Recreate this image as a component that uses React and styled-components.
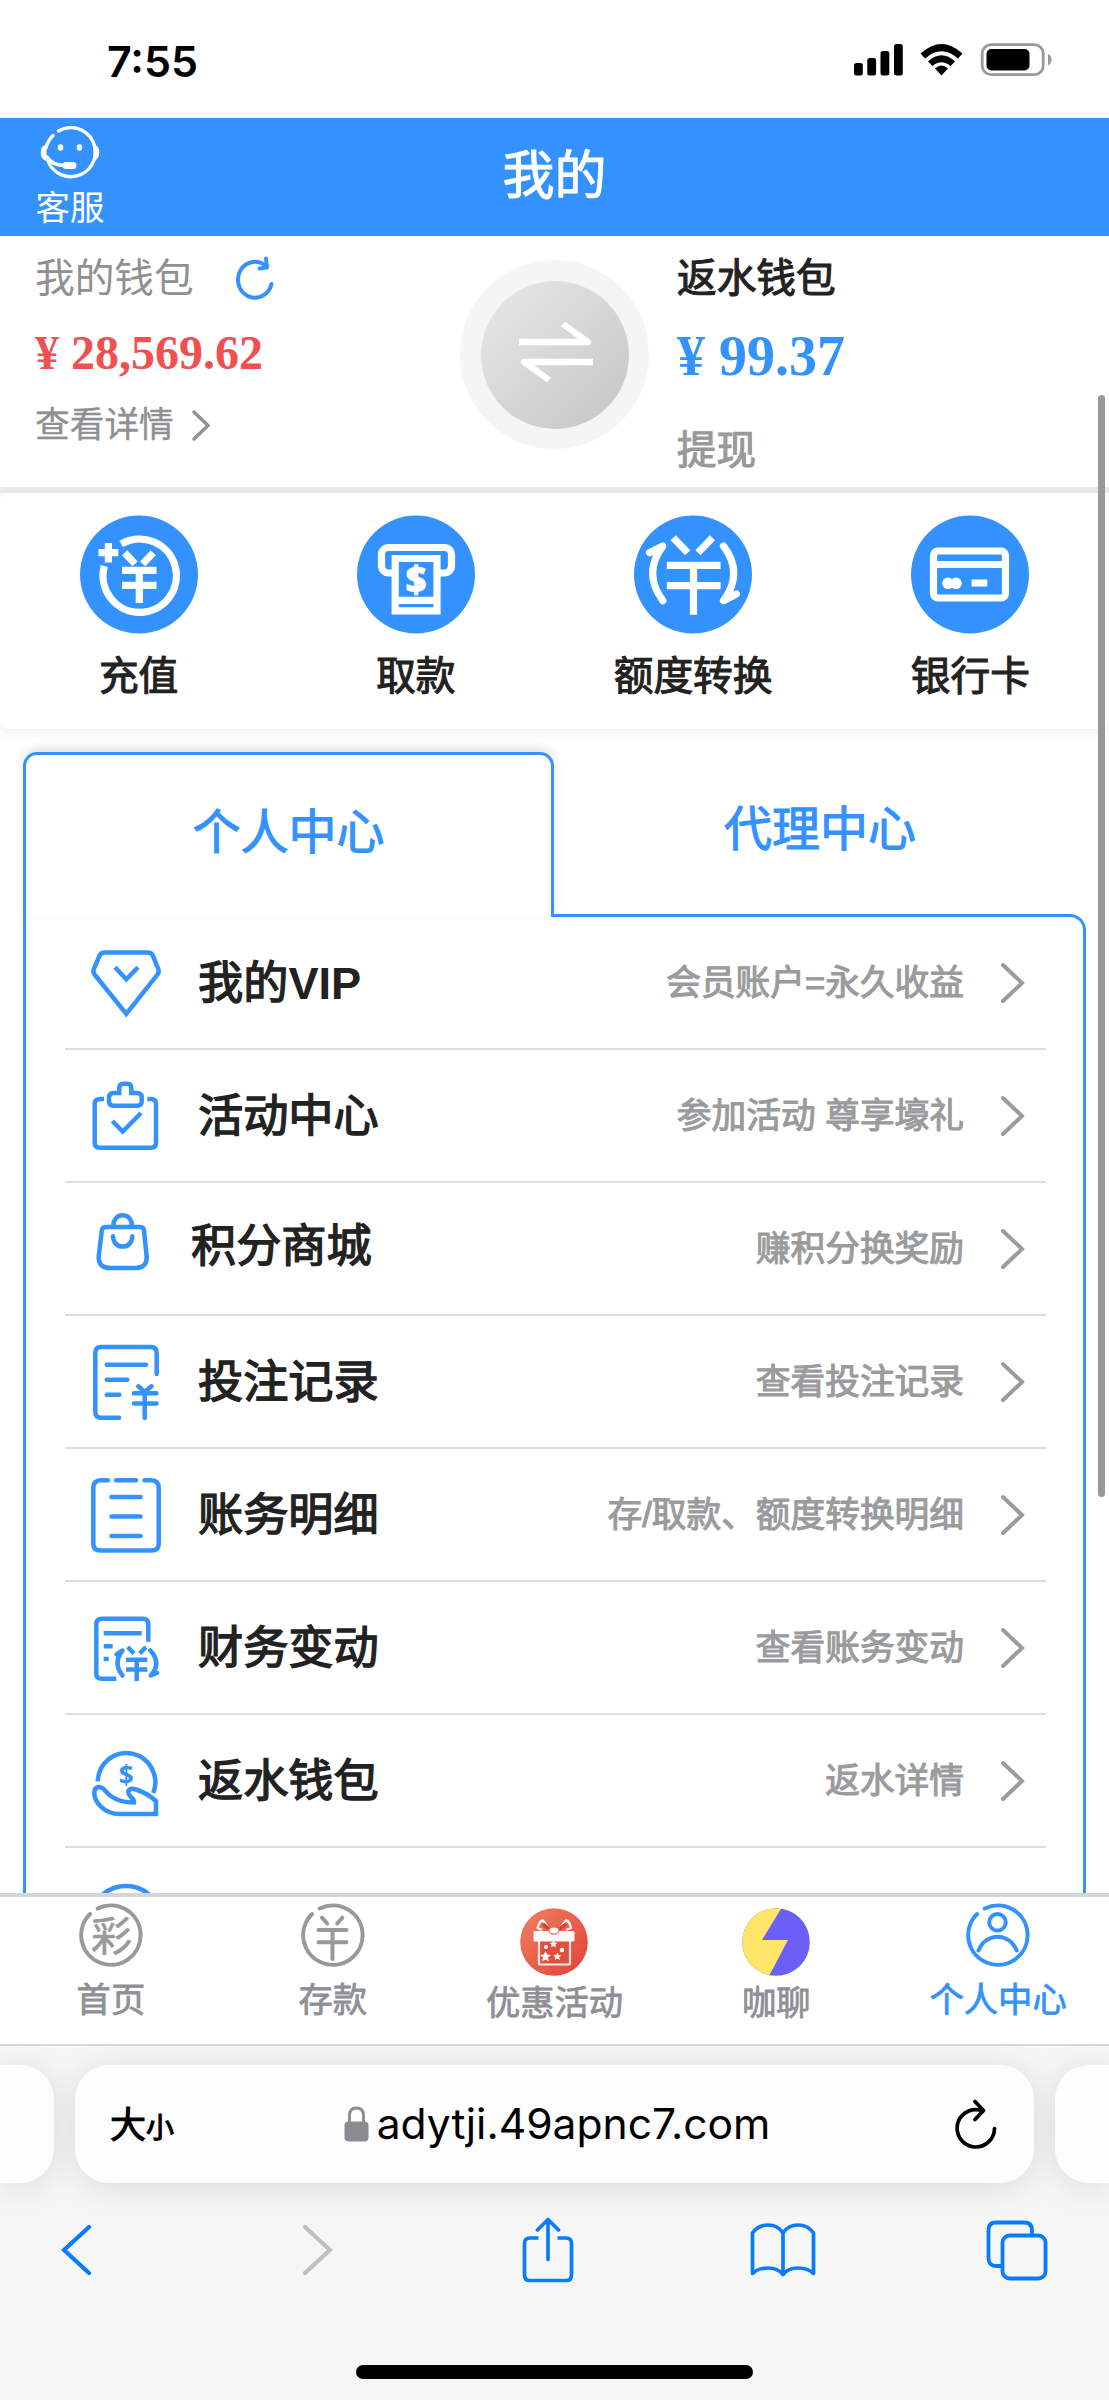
import styled, { createGlobalStyle, css } from "styled-components";

const BLUE = "#3492ff";
const IOS_BLUE = "#087cff";

const SvgText = styled.text`
  font-family: ${({ $bold }) => ($bold ? `"Open Sans", sans-serif` : `"Noto Sans CJK SC", sans-serif`)};
  font-size: ${({ $size }) => $size}px;
  font-weight: ${({ $bold }) => ($bold ? 700 : 400)};
  text-anchor: middle;
`;

const menus = [
  { icon: "vip", title: "我的", suffix: "VIP", desc: "会员账户=永久收益" },
  { icon: "activity", title: "活动中心", desc: "参加活动 尊享壕礼" },
  { icon: "mall", title: "积分商城", desc: "赚积分换奖励", narrow: true },
  { icon: "bet", title: "投注记录", desc: "查看投注记录" },
  { icon: "account", title: "账务明细", desc: "存/取款、额度转换明细" },
  { icon: "finance", title: "财务变动", desc: "查看账务变动" },
  { icon: "rebate", title: "返水钱包", desc: "返水详情" },
  { icon: "more", title: "", desc: "" },
];

const StatusIcons = () => (
  <svg width="200" height="36" viewBox="0 0 200 36">
    <rect x="1" y="21" width="8.8" height="12.5" rx="2.5" />
    <rect x="14.3" y="16" width="8.8" height="17.5" rx="2.5" />
    <rect x="27.5" y="9" width="8.8" height="24.5" rx="2.5" />
    <rect x="41" y="2" width="8.8" height="31.5" rx="2.5" />
    <path d="M67.5 11.5 Q88.5 -7.5 109.5 11.5 L105 16.5 Q88.5 2 72 16.5 Z" />
    <path d="M75 19.5 Q88.5 7 102 19.5 L97.5 24 Q88.5 16.5 79.5 24 Z" />
    <path d="M82 26.5 Q88.5 20.5 95 26.5 L88.5 33.5 Z" />
    <rect x="129.2" y="2.7" width="61" height="30" rx="9" fill="none" stroke="#9a9a9a" strokeWidth="2.8" />
    <rect x="133.5" y="7" width="43" height="21.5" rx="5" />
    <path d="M195 12 Q198.5 13.5 198.5 17.7 Q198.5 22 195 23.4 Z" fill="#9a9a9a" />
  </svg>
);

const ServiceIcon = () => (
  <svg width="60" height="54" viewBox="0 0 60 54" fill="none" stroke="#fff" strokeWidth="3.4" strokeLinecap="round">
    <path d="M18.5 5 A24.5 24.5 0 1 1 8 35" />
    <path d="M13 9.5 A25 25 0 0 0 6 22" />
    <path d="M5.5 20 Q1.5 21 1.8 27 Q2 32 5.5 33.5 Z" fill="#fff" strokeWidth="2" />
    <path d="M54.5 20 Q58.5 21 58.2 27 Q58 32 54.5 33.5 Z" fill="#fff" strokeWidth="2" />
    <path d="M7 31 Q12 39 24 39.5" />
    <rect x="24" y="37.5" width="11" height="4" rx="2" fill="#fff" strokeWidth="3" />
    <ellipse cx="20.5" cy="21.5" rx="1.6" ry="2" fill="#fff" strokeWidth="2.4" />
    <ellipse cx="39.5" cy="21.5" rx="1.6" ry="2" fill="#fff" strokeWidth="2.4" />
  </svg>
);

const RefreshIcon = () => (
  <svg width="40" height="44" viewBox="0 0 40 44" fill="none" stroke={BLUE} strokeWidth="4" strokeLinecap="round" strokeLinejoin="round">
    <path d="M31 10 A17 18 0 1 0 36.5 28" />
    <path d="M31 2.5 L32 11.5 L24.5 12.5" />
  </svg>
);

const SwapIcon = () => (
  <svg width="76" height="62" viewBox="0 0 76 62" fill="none" stroke="#fff" strokeWidth="6.4" strokeLinejoin="round">
    <path d="M1 21 H70 L45 3" />
    <path d="M75 41 H6 L31 59" />
  </svg>
);

const Chevron = ({ w = 24, h = 42, color = "#999b9d", stroke = 3.6, left }) => (
  <svg width={w} height={h} viewBox={`0 0 ${w} ${h}`} fill="none" stroke={color} strokeWidth={stroke} strokeLinecap="round" strokeLinejoin="miter">
    <path d={left ? `M${w - 3} 3 L3 ${h / 2} L${w - 3} ${h - 3}` : `M3 3 L${w - 3} ${h / 2} L3 ${h - 3}`} />
  </svg>
);

const actionIcons = {
  recharge: (
    <>
      <path d="M24.3 51 A36.7 36.7 0 1 0 41.2 29" />
      <path d="M18.5 37.7 H38.3 M28.4 28 V47.5" />
      <path d="M44.7 37.7 L55 48.9 M73.3 37.7 L62.7 48.9 M42 55.3 H76.5 M42 70.3 H76.5 M59.3 55 V88" />
    </>
  ),
  withdraw: (
    <>
      <path d="M38 58 H31.5 a7 7 0 0 1 -7 -7 V39.5 a7 7 0 0 1 7 -7 H87.5 a7 7 0 0 1 7 7 V51 a7 7 0 0 1 -7 7 H81" />
      <path d="M38.2 43.5 H80 V95.8 H38.2 Z M38.2 85.3 H80" />
      <SvgText x="59" y="76.5" $size={36} $bold fill="#fff" stroke="#fff" strokeWidth="1.6">$</SvgText>
    </>
  ),
  transfer: (
    <>
      <path d="M39.2 22.7 L53.7 37.7 M78.4 22.7 L64 37.7 M32.8 50.3 H86.6 M32.8 70.7 H86.6 M59.5 50 V99.7" />
      <path d="M15.5 37.7 L28.8 31 Q8.5 58 28.8 85.7" strokeLinecap="round" strokeLinejoin="round" />
      <path d="M89.5 31 Q110 58 89.5 85.7 L102.3 79" strokeLinecap="round" strokeLinejoin="round" />
    </>
  ),
  card: (
    <>
      <rect x="22.5" y="36" width="72" height="47" rx="4.5" />
      <path d="M22 49.5 H95 M60.6 68 H76.3" />
      <circle cx="37" cy="68.3" r="5.8" fill="#fff" stroke="none" />
      <circle cx="45" cy="68.3" r="5.8" fill="#fff" stroke="none" />
    </>
  ),
};

const ActionIcon = ({ name }) => (
  <svg width="118" height="119" viewBox="0 0 118 119" fill="none" stroke="#fff" strokeWidth="7.2">
    <circle cx="59" cy="59.5" r="59" fill={BLUE} stroke="none" />
    {actionIcons[name]}
  </svg>
);

const menuIcons = {
  vip: (
    <>
      <path d="M14 9.5 H57 Q60.5 9.5 61.8 12.5 L67.3 26 Q68.4 29 66.5 31.5 L35.3 71 L3.6 31.5 Q1.7 29 2.8 26 L8.6 12.5 Q10 9.5 14 9.5 Z" strokeLinejoin="miter" />
      <path d="M24 24.3 L35.3 36.3 L47 24.3" strokeLinecap="butt" strokeLinejoin="miter" />
    </>
  ),
  activity: (
    <>
      <path d="M13 23 H9 Q3.7 23 3.7 28 V67 Q3.7 71.7 9 71.7 H60 Q65 71.7 65 67 V28 Q65 23 60 23 H56.3" strokeLinecap="butt" />
      <path d="M28.3 17 V12 Q28.3 7.7 32 7.7 H36.5 Q40.3 7.7 40.3 12 V17 H46 Q50.7 17 50.7 21.5 V25.5 Q50.7 29.7 46 29.7 H22.5 Q18 29.7 18 25.5 V21.5 Q18 17 22.5 17 Z" strokeLinejoin="miter" />
      <path d="M21.3 45 L31.7 55.5 L50 37" strokeLinecap="butt" strokeLinejoin="miter" />
    </>
  ),
  mall: (
    <>
      <path d="M15 18 H49 Q52.7 18 53 21.5 L55.7 48 Q56 59 44 59 H19.5 Q7.3 59 7.7 48 L10.8 21.5 Q11.3 18 15 18 Z" />
      <path d="M22.3 17 C22.3 2.8 41 2.8 41 17" />
      <path d="M22 27.3 C22 41 41.3 41 41.3 27.3" />
    </>
  ),
  bet: (
    <>
      <path d="M65.7 32 V11 Q65.7 5 60 5 H10 Q4.3 5 4.3 11 V70 Q4.3 75.7 10 75.7 H28" />
      <path d="M15.7 22.7 H55 M15.7 37.7 H36.3 M15.7 52.7 H28.3" />
      <path d="M47.3 44.3 L53.7 50 L60.5 44.3 M43 51.3 H65.5 M43 61.5 H65.5 M53.7 50 V76" />
    </>
  ),
  account: (
    <>
      <path d="M17 5.2 H10 Q2.3 5.2 2.3 13 V69 Q2.3 75.6 10 75.6 H60 Q67.7 75.6 67.7 69 V13 Q67.7 5.2 60 5.2 H53.5" />
      <path d="M25 5.2 H45 M20.5 22 H49.5 M20.5 41.6 H49.5 M20.5 61 H49.5" />
    </>
  ),
  finance: (
    <>
      <path d="M57.3 33.7 V16 Q57.3 10.7 52 10.7 H11 Q5.3 10.7 5.3 16 V66 Q5.3 70.8 11 70.8 H25.3" strokeLinecap="butt" />
      <path d="M12.7 25.3 H50.7 M12.7 38.3 H21.7 M12.7 51 H17.7" strokeLinecap="butt" />
      <path d="M36.7 39 L43 45.5 M55 39 L48.7 45.5 M35 51.7 H56.3 M35 61.6 H56.3 M45.7 51.7 V73" strokeLinecap="butt" />
      <path d="M25.5 46.3 L31.5 42.5 Q21.5 55 31.5 67.5" />
      <path d="M59.3 42.5 Q71 55 59.8 67.5 L66 65" />
    </>
  ),
  rebate: (
    <>
      <path d="M6.7 40.4 A28.8 29.3 0 1 1 62.3 52" strokeLinecap="butt" />
      <path d="M3.3 52 C3.3 46 8 44.5 12 47.5 L19 54.5 C27 60.5 36 61.6 43 61.6 C44 57 38 57 37.3 51.5 C37 47 42 47.5 45 48.5 Q56 52 65 60 V73 H29 C12 73 3.3 60 3.3 52 Z" strokeLinejoin="miter" />
      <SvgText x="35.3" y="43.5" $size={26} $bold fill={BLUE} stroke="none">$</SvgText>
    </>
  ),
  more: <circle cx="35" cy="48" r="36" />,
};

const MenuIcon = ({ name, narrow }) => (
  <svg width={narrow ? 63 : 70} height="80" viewBox={narrow ? "0 0 63 80" : "0 0 70 80"} fill="none" stroke={BLUE} strokeWidth="4.5" strokeLinecap="round" strokeLinejoin="round">
    {menuIcons[name]}
  </svg>
);

const LineIcon = ({ children, color = "#999" }) => (
  <svg width="64" height="64" viewBox="0 0 64 64" fill="none" stroke={color} strokeWidth="4" strokeLinecap="round">
    <path d="M18.7 5.5 A29.7 29.7 0 1 1 11 11" />
    {children}
  </svg>
);

const GiftIcon = () => (
  <svg width="68" height="68" viewBox="0 0 68 68" fill="none">
    <defs>
      <linearGradient id="gift" x1="0" y1="0" x2="1" y2="1">
        <stop offset="0" stopColor="#f08060" />
        <stop offset="1" stopColor="#e24138" />
      </linearGradient>
    </defs>
    <circle cx="34" cy="34" r="33.8" fill="url(#gift)" />
    <path d="M19 30 H50 V55 Q50 56.5 48.5 56.5 H20.5 Q19 56.5 19 55 Z" fill="#e0503f" stroke="#ffe9e4" strokeWidth="2.2" />
    <path d="M29 21 L23 12.5 Q20 12 17.5 20 L22 22 M39 21 L46 12.5 Q49 12 51 20 L46 22" stroke="#fff2ee" strokeWidth="2.4" strokeLinejoin="round" />
    <path d="M29 21 L23 16 M39 21 L46 16" stroke="#cf3c30" strokeWidth="3" />
    <rect x="13.5" y="23" width="41" height="10.5" rx="1.5" fill="#fffaf8" />
    <ellipse cx="34" cy="22.5" rx="5" ry="3.6" fill="#fff" stroke="#ea6a50" strokeWidth="1.2" />
    <path d="M25.5 43 l1.6 3.6 3.8.4 -2.9 2.6 .9 3.9 -3.4-2 -3.4 2 .9-3.9 -2.9-2.6 3.8-.4z M37.3 44.5 l1.2 2.6 2.8.3 -2.1 1.9 .6 2.8 -2.5-1.5 -2.5 1.5 .6-2.8 -2.1-1.9 2.8-.3z M33.5 32.5 l1.2 2 2.6.4 -1.9 1.8 .4 2.6 -2.3-1.3 -2.3 1.3 .4-2.6 -1.9-1.8 2.6-.4z" fill="#fff" />
    <circle cx="26" cy="39" r="2" fill="#fff" />
    <circle cx="42" cy="42" r="2.2" fill="#fff" />
  </svg>
);

const BoltIcon = () => (
  <svg width="68" height="68" viewBox="0 0 68 68">
    <defs>
      <clipPath id="round"><circle cx="34" cy="34" r="33.8" /></clipPath>
    </defs>
    <g clipPath="url(#round)">
      <rect width="68" height="68" fill="#6b5ff8" />
      <path d="M0 0 H39.5 L20 32 H46 L27 68 H0 Z" fill="#ffe566" />
    </g>
  </svg>
);

const navs = [
  {
    label: "首页",
    icon: <LineIcon><SvgText x="32.5" y="47.8" $size={41} fill="#999" stroke="#999" strokeWidth="0.6">彩</SvgText></LineIcon>,
  },
  {
    label: "存款",
    icon: <LineIcon><path d="M21 14.7 L26.2 20.5 M41.3 14.7 L36.2 20.5 M17.5 27 H45.5 M17.5 39.3 H45.5 M31.5 27 V56" /></LineIcon>,
  },
  { label: "优惠活动", icon: <GiftIcon />, big: true },
  { label: "咖聊", icon: <BoltIcon />, big: true },
  {
    label: "个人中心",
    active: true,
    icon: <LineIcon color={BLUE}><circle cx="31.5" cy="19.3" r="8.3" /><path d="M12.5 47.5 C20 29 43 29 50.7 47.5" /></LineIcon>,
  },
];

const App = () => {
  return (
    <Screen>
      <GlobalStyle />
      <StatusBar>
        <Clock>7:55</Clock>
        <StatusIcons />
      </StatusBar>
      <Header>
        <Service>
          <ServiceIcon />
          <span>客服</span>
        </Service>
        <h1>我的</h1>
      </Header>
      <Main>
        <Wallets>
          <Wallet>
            <WalletName>我的钱包<RefreshIcon /></WalletName>
            <Amount>¥ 28,569.62</Amount>
            <Detail>查看详情<Chevron w={20} h={33} stroke={3.4} color="#8e9092" /></Detail>
          </Wallet>
          <Swap><div><SwapIcon /></div></Swap>
          <Wallet>
            <WalletName $strong>返水钱包</WalletName>
            <Amount $rebate>¥ 99.37</Amount>
            <Withdraw>提现</Withdraw>
          </Wallet>
        </Wallets>
        <Actions>
          <Action><ActionIcon name="recharge" /><p>充值</p></Action>
          <Action><ActionIcon name="withdraw" /><p>取款</p></Action>
          <Action><ActionIcon name="transfer" /><p>额度转换</p></Action>
          <Action><ActionIcon name="card" /><p>银行卡</p></Action>
        </Actions>
        <Tabs>
          <Tab $active>个人中心</Tab>
          <Tab>代理中心</Tab>
        </Tabs>
        <Panel>
          {menus.map((menu) => (
            <Row key={menu.icon} $narrow={menu.narrow}>
              <MenuIcon name={menu.icon} narrow={menu.narrow} />
              <p>
                {menu.title}
                {menu.suffix && <b>{menu.suffix}</b>}
              </p>
              <span>{menu.desc}</span>
              {menu.title && <Chevron w={25} h={42} stroke={4} />}
            </Row>
          ))}
        </Panel>
        <ScrollThumb />
      </Main>
      <BottomNav>
        {navs.map((nav) => (
          <NavItem key={nav.label} $active={nav.active} $big={nav.big}>
            {nav.icon}
            <span>{nav.label}</span>
          </NavItem>
        ))}
      </BottomNav>
      <Browser>
        <AddressRow>
          <SideCard />
          <AddressBar>
            <TextSize>大<small>小</small></TextSize>
            <Url>
              <svg width="25" height="36" viewBox="0 0 25 36">
                <path d="M5.5 17 V9.5 Q5.5 2 12.5 2 Q19.5 2 19.5 9.5 V17" fill="none" stroke="#8b8a90" strokeWidth="2.8" />
                <rect x="0.5" y="15.5" width="24" height="20" rx="4" fill="#8b8a90" />
              </svg>
              adytji.49apnc7.com
            </Url>
            <svg width="42" height="50" viewBox="0 0 42 50" fill="none" stroke="#000" strokeWidth="3.7" strokeLinecap="round" strokeLinejoin="round">
              <path d="M27 11.3 Q24 10.6 21 10.6 A18.7 18.7 0 1 0 39.5 29.5" />
              <path d="M20 2.5 L28.5 11.5 L20 20.5" />
            </svg>
          </AddressBar>
          <SideCard $right />
        </AddressRow>
        <Toolbar>
          <Chevron w={31} h={52} color={IOS_BLUE} stroke={4.2} left />
          <Chevron w={31} h={52} color="#bfbfc0" stroke={4.2} />
          <svg width="52" height="66" viewBox="0 0 52 66" fill="none" stroke={IOS_BLUE} strokeWidth="3.7" strokeLinecap="round" strokeLinejoin="round">
            <path d="M16.5 21 H8 Q2.5 21 2.5 26.5 V58 Q2.5 63.5 8 63.5 H44 Q49.5 63.5 49.5 58 V26.5 Q49.5 21 44 21 H35.5" strokeLinecap="butt" />
            <path d="M26 42.5 V3 M15.5 13 L26 2.5 L36.5 13" />
          </svg>
          <svg width="66" height="56" viewBox="0 0 66 56" fill="none" stroke={IOS_BLUE} strokeWidth="3.7" strokeLinejoin="round" strokeLinecap="round">
            <path d="M33 11 Q28 3 18 3 Q8 3 2.5 11 V51.5 Q8 46 18 46 Q28 46 33 52.5 Q38 46 48 46 Q58 46 63.5 51.5 V11 Q58 3 48 3 Q38 3 33 11 V52" />
          </svg>
          <svg width="62" height="62" viewBox="0 0 62 62" fill="none" stroke={IOS_BLUE} strokeWidth="3.8">
            <path d="M16 47 H10 Q2.5 47 2.5 39 V11 Q2.5 3.5 10 3.5 H38 Q46 3.5 46 11 V16.5" />
            <rect x="16.5" y="16.5" width="43" height="43" rx="7" />
          </svg>
        </Toolbar>
        <HomeIndicator />
      </Browser>
    </Screen>
  );
};

export default App;

const GlobalStyle = createGlobalStyle`
  * {
    box-sizing: border-box;
  }
  body {
    margin: 0;
    background-color: #fff;
    font-family: "Noto Sans CJK SC", sans-serif;
  }
  h1, p {
    margin: 0;
  }
  svg {
    display: block;
    flex-shrink: 0;
  }
`;

/* the CJK font has no medium cut, so regular is thickened a little */
const medium = css`
  font-weight: 400;
  -webkit-text-stroke: 1.1px currentColor;
`;

const Screen = styled.div`
  display: flex;
  flex-direction: column;
  width: 1109px;
  height: 2400px;
  overflow: hidden;
`;

const StatusBar = styled.div`
  display: flex;
  justify-content: space-between;
  align-items: flex-start;
  height: 118px;
  padding: 42px 56px 0 107px;
`;

const Clock = styled.div`
  font-family: Inter, sans-serif;
  font-size: 43px;
  font-weight: 600;
  line-height: 38px;
`;

const Header = styled.header`
  display: grid;
  grid-template-columns: 200px 1fr 200px;
  height: 118px;
  background-color: ${BLUE};
  color: #fff;
  h1 {
    font-size: 52px;
    line-height: 107px;
    text-align: center;
    ${medium}
  }
`;

const Service = styled.div`
  display: flex;
  flex-direction: column;
  align-items: center;
  width: 140px;
  padding-top: 8px;
  span {
    font-size: 34.5px;
    line-height: 50px;
  }
`;

const Main = styled.main`
  position: relative;
  height: 1657px;
  overflow: hidden;
`;

const Wallets = styled.section`
  display: grid;
  grid-template-columns: 425px 189px 1fr;
  height: 257px;
  padding-left: 35px;
  border-bottom: 6px solid #e9ebec;
`;

const Wallet = styled.div`
  &:last-child {
    padding-left: 28px;
  }
`;

const WalletName = styled.div`
  display: flex;
  align-items: center;
  gap: 41px;
  height: 60px;
  padding-top: 18px;
  color: #8e9092;
  font-size: 39.7px;
  line-height: 40px;
  svg {
    margin-top: 5px;
  }
  ${({ $strong }) =>
    $strong &&
    css`
      color: #222;
      ${medium}
    `}
`;

const Amount = styled.div`
  margin-top: ${({ $rebate }) => ($rebate ? 30 : 27)}px;
  color: ${({ $rebate }) => ($rebate ? BLUE : "#f05050")};
  font-family: "Liberation Serif", serif;
  font-size: ${({ $rebate }) => ($rebate ? 56 : 48)}px;
  font-weight: 700;
  line-height: 60px;
`;

const Detail = styled.div`
  display: flex;
  align-items: center;
  gap: 17px;
  margin-top: 19px;
  color: #8e9092;
  font-size: 34.7px;
  line-height: 40px;
  -webkit-text-stroke: 0.4px currentColor;
  svg {
    margin-top: 6px;
  }
`;

const Withdraw = styled.div`
  margin-top: 41px;
  color: #999;
  font-size: 39.5px;
  line-height: 40px;
  ${medium}
`;

const Swap = styled.div`
  display: flex;
  justify-content: center;
  align-items: center;
  width: 189px;
  height: 189px;
  margin-top: 24px;
  border-radius: 50%;
  background-color: #f4f6f6;
  div {
    display: flex;
    justify-content: center;
    align-items: center;
    width: 148px;
    height: 148px;
    padding: 0 0 6px 2px;
    border-radius: 50%;
    background: linear-gradient(135deg, #e8e8e8, #c4c5c5);
  }
`;

const Actions = styled.section`
  display: grid;
  grid-template-columns: repeat(4, 1fr);
  height: 236px;
  border-radius: 8px;
  box-shadow: 0 2px 14px rgba(0, 0, 0, 0.08);
`;

const Action = styled.div`
  display: flex;
  flex-direction: column;
  align-items: center;
  padding-top: 22px;
  p {
    margin-top: 9px;
    color: #222;
    font-size: 39.7px;
    line-height: 60px;
    ${medium}
  }
`;

const Tabs = styled.div`
  display: grid;
  grid-template-columns: 531px 1fr;
  height: 165px;
  margin: 23px 23px -3px;
`;

const Tab = styled.div`
  height: 165px;
  color: ${BLUE};
  font-size: 48px;
  line-height: 146px;
  text-align: center;
  ${medium}
  ${({ $active }) =>
    $active &&
    css`
      position: relative;
      z-index: 1;
      border: 3px solid ${BLUE};
      border-bottom: 0;
      border-radius: 14px 14px 0 0;
      background-color: #fff;
      box-shadow: 0 -5px 10px rgba(0, 0, 0, 0.1);
    `}
`;

const Panel = styled.section`
  height: 1100px;
  margin: 0 23px;
  padding: 0 37px 0 39px;
  border: 3px solid ${BLUE};
  border-radius: 0 16px 0 0;
  background-color: #fff;
`;

const Row = styled.div`
  display: flex;
  align-items: center;
  height: 133px;
  padding: 0 21px 0 26px;
  border-bottom: 2px solid #dcddde;
  p {
    flex: 1;
    margin-left: 37px;
    margin-top: ${({ $narrow }) => ($narrow ? -4 : 2)}px;
    color: #222;
    font-family: "Liberation Sans", "Noto Sans CJK SC", sans-serif;
    font-size: 45.2px;
    line-height: 60px;
    ${medium}
    -webkit-text-stroke-width: 1.4px;
  }
  b {
    font-weight: 700;
    -webkit-text-stroke-width: 0;
  }
  span {
    margin-right: 36px;
    color: #999b9d;
    font-family: "Liberation Sans", "Noto Sans CJK SC", sans-serif;
    font-size: 34.7px;
    line-height: 50px;
    ${medium}
  }
`;

const ScrollThumb = styled.div`
  position: absolute;
  top: 159px;
  right: 4px;
  width: 7px;
  height: 1102px;
  border-radius: 4px;
  background-color: #989898;
`;

const BottomNav = styled.nav`
  display: grid;
  grid-template-columns: repeat(5, 1fr);
  height: 151px;
  border-top: 4px solid #d4d5d5;
  background-color: #fff;
`;

const NavItem = styled.div`
  display: flex;
  flex-direction: column;
  align-items: center;
  padding-top: ${({ $big }) => ($big ? 11 : 6)}px;
  color: ${({ $active }) => ($active ? BLUE : "#8f9095")};
  span {
    margin-top: ${({ $big }) => ($big ? -1 : 5)}px;
    font-size: 34.3px;
    line-height: 50px;
    ${medium}
    -webkit-text-stroke-width: 0.8px;
  }
`;

const Browser = styled.footer`
  display: flex;
  flex-direction: column;
  flex: 1;
  border-top: 2px solid #d8d8d9;
  background-color: #f6f6f6;
`;

const AddressRow = styled.div`
  display: flex;
  justify-content: space-between;
  margin-top: 19px;
`;

const card = css`
  height: 118px;
  background-color: #fdfdfd;
  box-shadow: 0 4px 34px rgba(0, 0, 0, 0.11);
`;

const SideCard = styled.div`
  width: 54px;
  border-radius: ${({ $right }) => ($right ? "34px 0 0 34px" : "0 34px 34px 0")};
  ${card}
`;

const AddressBar = styled.div`
  display: grid;
  grid-template-columns: 1fr auto 1fr;
  align-items: center;
  width: 959px;
  padding: 0 37px 0 35px;
  border-radius: 34px;
  ${card}
  > svg {
    justify-self: end;
  }
`;

const TextSize = styled.div`
  font-size: 36px;
  line-height: 40px;
  ${medium}
  small {
    font-size: 28px;
  }
`;

const Url = styled.div`
  display: flex;
  align-items: center;
  gap: 8px;
  padding-left: 7px;
  font-family: Inter, sans-serif;
  font-size: 42.6px;
  line-height: 60px;
`;

const Toolbar = styled.div`
  display: grid;
  grid-template-columns: 241px 220px 228px 236px 62px;
  align-items: center;
  height: 70px;
  margin-top: 32px;
  padding-left: 61px;
`;

const HomeIndicator = styled.div`
  width: 397px;
  height: 14px;
  margin: 80px auto 0;
  border-radius: 7px;
  background-color: #000;
`;
